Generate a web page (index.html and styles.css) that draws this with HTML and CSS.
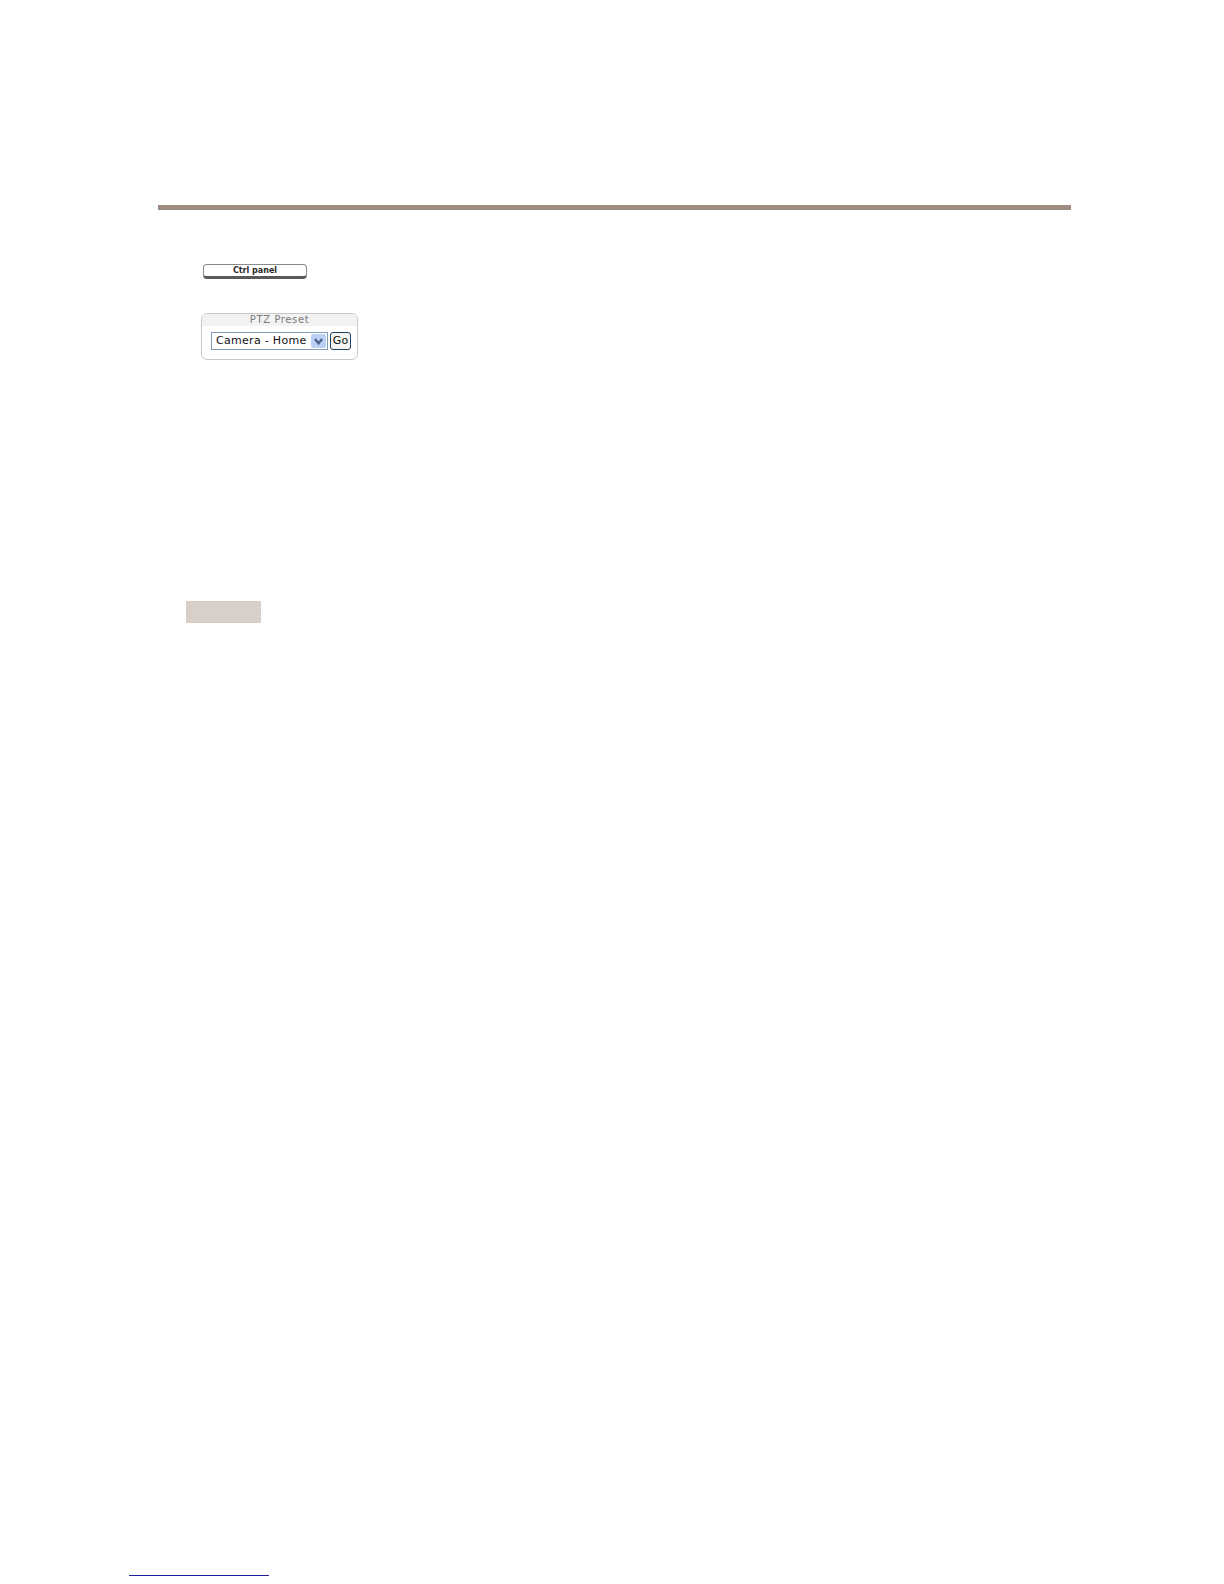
FILE: index.html
```html
<!DOCTYPE html>
<html>
<head>
<meta charset="utf-8">
<link rel="stylesheet" href="styles.css">
</head>
<body>
<div class="page">
  <div class="rule"></div>
  <div class="ctrl-row">
    <button class="ctrl-btn" type="button">Ctrl panel</button>
  </div>
  <div class="ptz">
    <div class="ptz-title">PTZ Preset</div>
    <div class="ptz-body">
      <div class="select">
        <span class="select-text">Camera - Home</span>
        <span class="select-arrow">
          <svg width="11" height="11" viewBox="0 0 11 11"><path d="M2 3 L5.5 7.5 L9 3" fill="none" stroke="#4a5f88" stroke-width="2.2"/></svg>
        </span>
      </div>
      <button class="go-btn" type="button">Go</button>
    </div>
  </div>
  <div class="tag"></div>
  <div class="footer-link"></div>
</div>
</body>
</html>
```

FILE: styles.css
```css
html, body {
  margin: 0;
  padding: 0;
  background: #ffffff;
}
.page {
  padding-top: 205px;
  height: 1379px;
  font-family: "DejaVu Sans", Verdana, sans-serif;
}
.rule {
  margin-left: 158px;
  width: 913px;
  height: 5px;
  background: #9c8b7e;
}
.ctrl-row {
  margin-top: 54px;
  margin-left: 203px;
  height: 15px;
}
.ctrl-btn {
  display: block;
  box-sizing: border-box;
  width: 104px;
  height: 15px;
  margin: 0;
  padding: 0;
  background: #ffffff;
  border: 1px solid #8a8a8a;
  border-bottom: 3px solid #5a5a5a;
  border-radius: 4px;
  font-family: "DejaVu Sans", Verdana, sans-serif;
  font-weight: bold;
  font-size: 8px;
  line-height: 10px;
  color: #2a2a2a;
}
.ptz {
  box-sizing: border-box;
  margin-top: 34px;
  margin-left: 201px;
  width: 157px;
  height: 47px;
  border: 1px solid #c8c8c8;
  border-radius: 6px;
  overflow: hidden;
}
.ptz-title {
  height: 12px;
  background: #f2f2f2;
  text-align: center;
  font-size: 10px;
  letter-spacing: 0.6px;
  line-height: 12px;
  color: #7a7a7a;
}
.ptz-body {
  display: flex;
  align-items: center;
  gap: 2px;
  padding: 6px 0 0 9px;
}
.select {
  box-sizing: border-box;
  display: flex;
  align-items: center;
  justify-content: space-between;
  width: 117px;
  height: 18px;
  border: 1px solid #7f9db9;
  background: #ffffff;
  padding: 0 1px 0 4px;
}
.select-text {
  font-size: 11px;
  letter-spacing: 0.3px;
  line-height: 14px;
  color: #111111;
  white-space: nowrap;
}
.select-arrow {
  display: flex;
  align-items: center;
  justify-content: center;
  width: 15px;
  height: 14px;
  background: #bcd0f6;
  border-radius: 2px;
}
.go-btn {
  box-sizing: border-box;
  width: 21px;
  height: 18px;
  margin: 0;
  padding: 0;
  background: #f4f4f0;
  border: 1px solid #1d3d63;
  border-radius: 3px;
  font-family: "DejaVu Sans", Verdana, sans-serif;
  font-size: 11px;
  line-height: 14px;
  color: #111111;
}
.tag {
  margin-top: 241px;
  margin-left: 186px;
  width: 75px;
  height: 22px;
  background: #d8cfc8;
}
.footer-link {
  margin-top: 952px;
  margin-left: 129px;
  width: 140px;
  height: 0;
  border-bottom: 1px solid #1f1fa0;
}
```
